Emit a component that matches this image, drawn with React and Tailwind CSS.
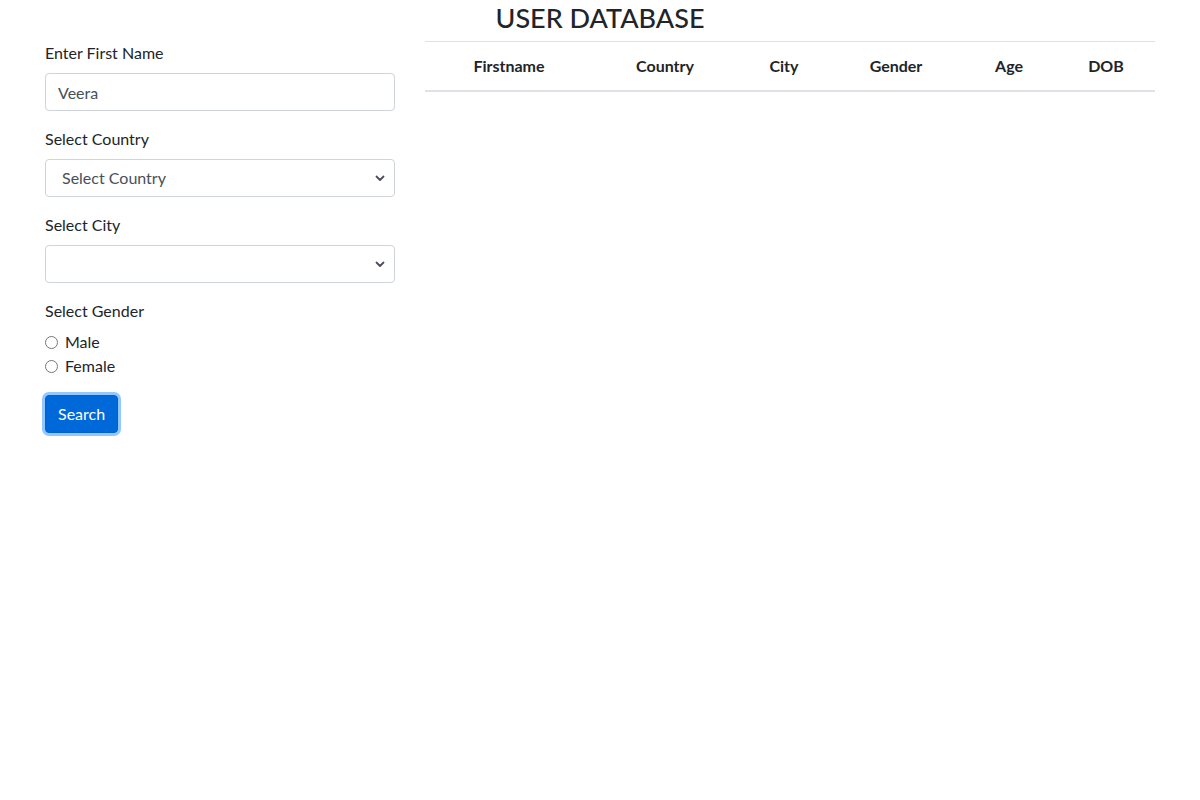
import React from 'react';

const font = { fontFamily: 'Lato, "Noto Sans", sans-serif' };

function Chevron() {
  return (
    <svg width="10" height="8" viewBox="0 0 10 8" className="absolute right-[10px] top-1/2 -translate-y-1/2 pointer-events-none">
      <path d="M1.5 2.5l3.5 3.5 3.5-3.5" fill="none" stroke="#4b5058" strokeWidth="1.8" strokeLinecap="round" strokeLinejoin="round" />
    </svg>
  );
}

function Field({ label, children, className = '' }) {
  return (
    <div className={className}>
      <label className="block text-base leading-6 mb-2">{label}</label>
      {children}
    </div>
  );
}

function Radio({ label }) {
  return (
    <label className="flex items-center h-6 text-base">
      <span className="w-[13px] h-[13px] rounded-full border border-[#767676] mr-[7px] bg-white" />
      {label}
    </label>
  );
}

export default function App() {
  const cols = ['Firstname', 'Country', 'City', 'Gender', 'Age', 'DOB'];

  return (
    <div className="min-h-[800px] bg-white text-[#212529]" style={font}>
      <h2 className="text-center text-[27px] leading-[34px] font-medium pt-[1px] mb-[6px]">USER DATABASE</h2>
      <div className="flex px-[45px] gap-[30px]">
        <div className="w-[350px] shrink-0">
          <Field label="Enter First Name">
            <input
              readOnly
              value="Veera"
              className="w-full h-[38px] px-3 border border-[#ced4da] rounded-[4px] text-base text-[#495057] outline-none"
            />
          </Field>
          <Field label="Select Country" className="mt-4">
            <div className="relative">
              <div className="w-full h-[38px] pl-4 flex items-center border border-[#ced4da] rounded-[4px] text-base text-[#495057]">Select Country</div>
              <Chevron />
            </div>
          </Field>
          <Field label="Select City" className="mt-4">
            <div className="relative">
              <div className="w-full h-[38px] border border-[#ced4da] rounded-[4px]" />
              <Chevron />
            </div>
          </Field>
          <div className="mt-4">
            <div className="text-base leading-6">Select Gender</div>
            <div className="mt-[7px]">
              <Radio label="Male" />
              <Radio label="Female" />
            </div>
          </div>
          <button className="mt-[17px] h-[38px] px-3 rounded-[4px] bg-[#0069d9] border border-[#0062cc] text-white text-base shadow-[0_0_0_3px_rgba(38,143,255,0.5)]">
            Search
          </button>
        </div>
        <div className="w-[730px] shrink-0">
          <div className="grid grid-cols-[168px_144px_94px_130px_96px_98px] border-t border-[#dee2e6] border-b-2 h-[51px] items-center">
            {cols.map((c) => (
              <div key={c} className="text-center font-bold text-base">{c}</div>
            ))}
          </div>
        </div>
      </div>
    </div>
  );
}
